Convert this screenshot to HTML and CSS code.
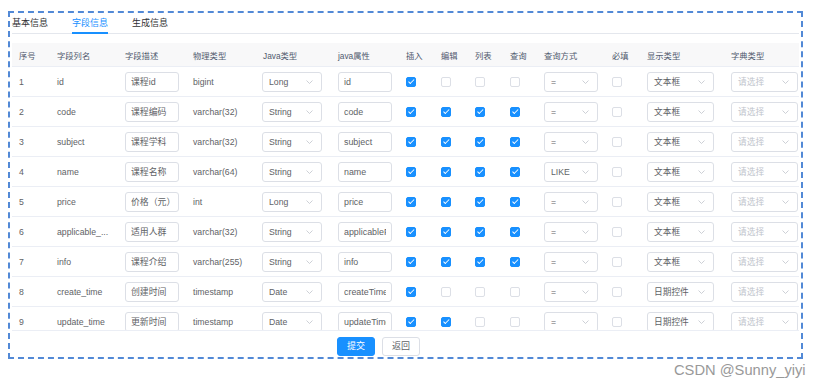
FILE: index.html
```html
<!DOCTYPE html>
<html>
<head>
<meta charset="utf-8">
<link rel="stylesheet" href="styles.css">
</head>
<body>
<div class="frame">
  <div class="tabs">
    <div class="tab">基本信息</div>
    <div class="tab active">字段信息</div>
    <div class="tab">生成信息</div>
  </div>
  <div class="table-wrap">
    <table class="grid">
      <colgroup>
        <col class="c1"><col class="c2"><col class="c3"><col class="c4"><col class="c5"><col class="c6"><col class="c7"><col class="c8"><col class="c9"><col class="c10"><col class="c11"><col class="c12"><col class="c13"><col class="c14">
      </colgroup>
      <thead>
        <tr><th>序号</th><th>字段列名</th><th>字段描述</th><th>物理类型</th><th>Java类型</th><th>java属性</th><th>插入</th><th>编辑</th><th>列表</th><th>查询</th><th>查询方式</th><th>必填</th><th>显示类型</th><th>字典类型</th></tr>
      </thead>
      <tbody>
        <tr><td>1</td><td class="ell">id</td><td><input class="inp" value="课程id"></td><td>bigint</td>
          <td><div class="sel w-java"><span class="val">Long</span><svg class="arr" width="7" height="4" viewBox="0 0 7 4"><polyline points="0.5,0.5 3.5,3.5 6.5,0.5" fill="none" stroke="#c0c4cc" stroke-width="0.8"/></svg></div></td>
          <td><input class="inp" value="id"></td>
          <td><span class="cb on"></span></td><td><span class="cb"></span></td><td><span class="cb"></span></td><td><span class="cb"></span></td>
          <td><div class="sel w-q"><span class="val">=</span><svg class="arr" width="7" height="4" viewBox="0 0 7 4"><polyline points="0.5,0.5 3.5,3.5 6.5,0.5" fill="none" stroke="#c0c4cc" stroke-width="0.8"/></svg></div></td>
          <td><span class="cb"></span></td>
          <td><div class="sel w-d"><span class="val">文本框</span><svg class="arr" width="7" height="4" viewBox="0 0 7 4"><polyline points="0.5,0.5 3.5,3.5 6.5,0.5" fill="none" stroke="#c0c4cc" stroke-width="0.8"/></svg></div></td>
          <td><div class="sel w-d"><span class="val ph">请选择</span><svg class="arr" width="7" height="4" viewBox="0 0 7 4"><polyline points="0.5,0.5 3.5,3.5 6.5,0.5" fill="none" stroke="#c0c4cc" stroke-width="0.8"/></svg></div></td>
        </tr>
        <tr><td>2</td><td class="ell">code</td><td><input class="inp" value="课程编码"></td><td>varchar(32)</td>
          <td><div class="sel w-java"><span class="val">String</span><svg class="arr" width="7" height="4" viewBox="0 0 7 4"><polyline points="0.5,0.5 3.5,3.5 6.5,0.5" fill="none" stroke="#c0c4cc" stroke-width="0.8"/></svg></div></td>
          <td><input class="inp" value="code"></td>
          <td><span class="cb on"></span></td><td><span class="cb on"></span></td><td><span class="cb on"></span></td><td><span class="cb on"></span></td>
          <td><div class="sel w-q"><span class="val">=</span><svg class="arr" width="7" height="4" viewBox="0 0 7 4"><polyline points="0.5,0.5 3.5,3.5 6.5,0.5" fill="none" stroke="#c0c4cc" stroke-width="0.8"/></svg></div></td>
          <td><span class="cb"></span></td>
          <td><div class="sel w-d"><span class="val">文本框</span><svg class="arr" width="7" height="4" viewBox="0 0 7 4"><polyline points="0.5,0.5 3.5,3.5 6.5,0.5" fill="none" stroke="#c0c4cc" stroke-width="0.8"/></svg></div></td>
          <td><div class="sel w-d"><span class="val ph">请选择</span><svg class="arr" width="7" height="4" viewBox="0 0 7 4"><polyline points="0.5,0.5 3.5,3.5 6.5,0.5" fill="none" stroke="#c0c4cc" stroke-width="0.8"/></svg></div></td>
        </tr>
        <tr><td>3</td><td class="ell">subject</td><td><input class="inp" value="课程学科"></td><td>varchar(32)</td>
          <td><div class="sel w-java"><span class="val">String</span><svg class="arr" width="7" height="4" viewBox="0 0 7 4"><polyline points="0.5,0.5 3.5,3.5 6.5,0.5" fill="none" stroke="#c0c4cc" stroke-width="0.8"/></svg></div></td>
          <td><input class="inp" value="subject"></td>
          <td><span class="cb on"></span></td><td><span class="cb on"></span></td><td><span class="cb on"></span></td><td><span class="cb on"></span></td>
          <td><div class="sel w-q"><span class="val">=</span><svg class="arr" width="7" height="4" viewBox="0 0 7 4"><polyline points="0.5,0.5 3.5,3.5 6.5,0.5" fill="none" stroke="#c0c4cc" stroke-width="0.8"/></svg></div></td>
          <td><span class="cb"></span></td>
          <td><div class="sel w-d"><span class="val">文本框</span><svg class="arr" width="7" height="4" viewBox="0 0 7 4"><polyline points="0.5,0.5 3.5,3.5 6.5,0.5" fill="none" stroke="#c0c4cc" stroke-width="0.8"/></svg></div></td>
          <td><div class="sel w-d"><span class="val ph">请选择</span><svg class="arr" width="7" height="4" viewBox="0 0 7 4"><polyline points="0.5,0.5 3.5,3.5 6.5,0.5" fill="none" stroke="#c0c4cc" stroke-width="0.8"/></svg></div></td>
        </tr>
        <tr><td>4</td><td class="ell">name</td><td><input class="inp" value="课程名称"></td><td>varchar(64)</td>
          <td><div class="sel w-java"><span class="val">String</span><svg class="arr" width="7" height="4" viewBox="0 0 7 4"><polyline points="0.5,0.5 3.5,3.5 6.5,0.5" fill="none" stroke="#c0c4cc" stroke-width="0.8"/></svg></div></td>
          <td><input class="inp" value="name"></td>
          <td><span class="cb on"></span></td><td><span class="cb on"></span></td><td><span class="cb on"></span></td><td><span class="cb on"></span></td>
          <td><div class="sel w-q"><span class="val">LIKE</span><svg class="arr" width="7" height="4" viewBox="0 0 7 4"><polyline points="0.5,0.5 3.5,3.5 6.5,0.5" fill="none" stroke="#c0c4cc" stroke-width="0.8"/></svg></div></td>
          <td><span class="cb"></span></td>
          <td><div class="sel w-d"><span class="val">文本框</span><svg class="arr" width="7" height="4" viewBox="0 0 7 4"><polyline points="0.5,0.5 3.5,3.5 6.5,0.5" fill="none" stroke="#c0c4cc" stroke-width="0.8"/></svg></div></td>
          <td><div class="sel w-d"><span class="val ph">请选择</span><svg class="arr" width="7" height="4" viewBox="0 0 7 4"><polyline points="0.5,0.5 3.5,3.5 6.5,0.5" fill="none" stroke="#c0c4cc" stroke-width="0.8"/></svg></div></td>
        </tr>
        <tr><td>5</td><td class="ell">price</td><td><input class="inp" value="价格（元）"></td><td>int</td>
          <td><div class="sel w-java"><span class="val">Long</span><svg class="arr" width="7" height="4" viewBox="0 0 7 4"><polyline points="0.5,0.5 3.5,3.5 6.5,0.5" fill="none" stroke="#c0c4cc" stroke-width="0.8"/></svg></div></td>
          <td><input class="inp" value="price"></td>
          <td><span class="cb on"></span></td><td><span class="cb on"></span></td><td><span class="cb on"></span></td><td><span class="cb on"></span></td>
          <td><div class="sel w-q"><span class="val">=</span><svg class="arr" width="7" height="4" viewBox="0 0 7 4"><polyline points="0.5,0.5 3.5,3.5 6.5,0.5" fill="none" stroke="#c0c4cc" stroke-width="0.8"/></svg></div></td>
          <td><span class="cb"></span></td>
          <td><div class="sel w-d"><span class="val">文本框</span><svg class="arr" width="7" height="4" viewBox="0 0 7 4"><polyline points="0.5,0.5 3.5,3.5 6.5,0.5" fill="none" stroke="#c0c4cc" stroke-width="0.8"/></svg></div></td>
          <td><div class="sel w-d"><span class="val ph">请选择</span><svg class="arr" width="7" height="4" viewBox="0 0 7 4"><polyline points="0.5,0.5 3.5,3.5 6.5,0.5" fill="none" stroke="#c0c4cc" stroke-width="0.8"/></svg></div></td>
        </tr>
        <tr><td>6</td><td class="ell">applicable_...</td><td><input class="inp" value="适用人群"></td><td>varchar(32)</td>
          <td><div class="sel w-java"><span class="val">String</span><svg class="arr" width="7" height="4" viewBox="0 0 7 4"><polyline points="0.5,0.5 3.5,3.5 6.5,0.5" fill="none" stroke="#c0c4cc" stroke-width="0.8"/></svg></div></td>
          <td><input class="inp" value="applicablePerson"></td>
          <td><span class="cb on"></span></td><td><span class="cb on"></span></td><td><span class="cb on"></span></td><td><span class="cb on"></span></td>
          <td><div class="sel w-q"><span class="val">=</span><svg class="arr" width="7" height="4" viewBox="0 0 7 4"><polyline points="0.5,0.5 3.5,3.5 6.5,0.5" fill="none" stroke="#c0c4cc" stroke-width="0.8"/></svg></div></td>
          <td><span class="cb"></span></td>
          <td><div class="sel w-d"><span class="val">文本框</span><svg class="arr" width="7" height="4" viewBox="0 0 7 4"><polyline points="0.5,0.5 3.5,3.5 6.5,0.5" fill="none" stroke="#c0c4cc" stroke-width="0.8"/></svg></div></td>
          <td><div class="sel w-d"><span class="val ph">请选择</span><svg class="arr" width="7" height="4" viewBox="0 0 7 4"><polyline points="0.5,0.5 3.5,3.5 6.5,0.5" fill="none" stroke="#c0c4cc" stroke-width="0.8"/></svg></div></td>
        </tr>
        <tr><td>7</td><td class="ell">info</td><td><input class="inp" value="课程介绍"></td><td>varchar(255)</td>
          <td><div class="sel w-java"><span class="val">String</span><svg class="arr" width="7" height="4" viewBox="0 0 7 4"><polyline points="0.5,0.5 3.5,3.5 6.5,0.5" fill="none" stroke="#c0c4cc" stroke-width="0.8"/></svg></div></td>
          <td><input class="inp" value="info"></td>
          <td><span class="cb on"></span></td><td><span class="cb on"></span></td><td><span class="cb on"></span></td><td><span class="cb on"></span></td>
          <td><div class="sel w-q"><span class="val">=</span><svg class="arr" width="7" height="4" viewBox="0 0 7 4"><polyline points="0.5,0.5 3.5,3.5 6.5,0.5" fill="none" stroke="#c0c4cc" stroke-width="0.8"/></svg></div></td>
          <td><span class="cb"></span></td>
          <td><div class="sel w-d"><span class="val">文本框</span><svg class="arr" width="7" height="4" viewBox="0 0 7 4"><polyline points="0.5,0.5 3.5,3.5 6.5,0.5" fill="none" stroke="#c0c4cc" stroke-width="0.8"/></svg></div></td>
          <td><div class="sel w-d"><span class="val ph">请选择</span><svg class="arr" width="7" height="4" viewBox="0 0 7 4"><polyline points="0.5,0.5 3.5,3.5 6.5,0.5" fill="none" stroke="#c0c4cc" stroke-width="0.8"/></svg></div></td>
        </tr>
        <tr><td>8</td><td class="ell">create_time</td><td><input class="inp" value="创建时间"></td><td>timestamp</td>
          <td><div class="sel w-java"><span class="val">Date</span><svg class="arr" width="7" height="4" viewBox="0 0 7 4"><polyline points="0.5,0.5 3.5,3.5 6.5,0.5" fill="none" stroke="#c0c4cc" stroke-width="0.8"/></svg></div></td>
          <td><input class="inp" value="createTime"></td>
          <td><span class="cb on"></span></td><td><span class="cb"></span></td><td><span class="cb"></span></td><td><span class="cb"></span></td>
          <td><div class="sel w-q"><span class="val">=</span><svg class="arr" width="7" height="4" viewBox="0 0 7 4"><polyline points="0.5,0.5 3.5,3.5 6.5,0.5" fill="none" stroke="#c0c4cc" stroke-width="0.8"/></svg></div></td>
          <td><span class="cb"></span></td>
          <td><div class="sel w-d"><span class="val">日期控件</span><svg class="arr" width="7" height="4" viewBox="0 0 7 4"><polyline points="0.5,0.5 3.5,3.5 6.5,0.5" fill="none" stroke="#c0c4cc" stroke-width="0.8"/></svg></div></td>
          <td><div class="sel w-d"><span class="val ph">请选择</span><svg class="arr" width="7" height="4" viewBox="0 0 7 4"><polyline points="0.5,0.5 3.5,3.5 6.5,0.5" fill="none" stroke="#c0c4cc" stroke-width="0.8"/></svg></div></td>
        </tr>
        <tr><td>9</td><td class="ell">update_time</td><td><input class="inp" value="更新时间"></td><td>timestamp</td>
          <td><div class="sel w-java"><span class="val">Date</span><svg class="arr" width="7" height="4" viewBox="0 0 7 4"><polyline points="0.5,0.5 3.5,3.5 6.5,0.5" fill="none" stroke="#c0c4cc" stroke-width="0.8"/></svg></div></td>
          <td><input class="inp" value="updateTime"></td>
          <td><span class="cb on"></span></td><td><span class="cb on"></span></td><td><span class="cb"></span></td><td><span class="cb"></span></td>
          <td><div class="sel w-q"><span class="val">=</span><svg class="arr" width="7" height="4" viewBox="0 0 7 4"><polyline points="0.5,0.5 3.5,3.5 6.5,0.5" fill="none" stroke="#c0c4cc" stroke-width="0.8"/></svg></div></td>
          <td><span class="cb"></span></td>
          <td><div class="sel w-d"><span class="val">日期控件</span><svg class="arr" width="7" height="4" viewBox="0 0 7 4"><polyline points="0.5,0.5 3.5,3.5 6.5,0.5" fill="none" stroke="#c0c4cc" stroke-width="0.8"/></svg></div></td>
          <td><div class="sel w-d"><span class="val ph">请选择</span><svg class="arr" width="7" height="4" viewBox="0 0 7 4"><polyline points="0.5,0.5 3.5,3.5 6.5,0.5" fill="none" stroke="#c0c4cc" stroke-width="0.8"/></svg></div></td>
        </tr>
      </tbody>
    </table>
  </div>
  <div class="actions">
    <button class="btn primary">提交</button>
    <button class="btn">返回</button>
  </div>
</div>
<div class="watermark">CSDN @Sunny_yiyi</div>
</body>
</html>
```

FILE: styles.css
```css
html, body {
  margin: 0;
  padding: 0;
  background: #ffffff;
}
body {
  font-family: "Liberation Sans", Arial, "Noto Sans CJK SC", sans-serif;
  color: #606266;
  padding-top: 11px;
  padding-left: 8px;
  position: relative;
  width: 823px;
  height: 389px;
  box-sizing: border-box;
  overflow: hidden;
}
.frame {
  width: 795px;
  height: 348px;
  box-sizing: border-box;
  border: 2px dashed #5289d6;
  padding: 0 2px;
  display: flex;
  flex-direction: column;
}
.tabs {
  display: flex;
  border-bottom: 1px solid #e4e7ed;
}
.tab {
  font-size: 9px;
  line-height: 17px;
  height: 17px;
  padding: 2px 12px 0;
  color: #303133;
  border-bottom: 2px solid transparent;
  margin-bottom: -1px;
}
.tab:first-child {
  padding-left: 0;
}
.tab.active {
  color: #1890ff;
  border-bottom-color: #1890ff;
  padding: 2px 0 0;
  margin: 0 12px -1px;
}
.table-wrap {
  margin-top: 9px;
  height: 287px;
  overflow: hidden;
  border-bottom: 1px solid #ebeef5;
}
.grid {
  width: 787px;
  table-layout: fixed;
  border-collapse: collapse;
  border-spacing: 0;
}
.c1 { width: 38px; }
.c2 { width: 68px; }
.c3 { width: 68px; }
.c4 { width: 70px; }
.c5 { width: 75px; }
.c6 { width: 68px; }
.c7 { width: 35px; }
.c8 { width: 34px; }
.c9 { width: 35px; }
.c10 { width: 34px; }
.c11 { width: 68px; }
.c12 { width: 35px; }
.c13 { width: 84px; }
.c14 { width: 75px; }
.grid th {
  background: #f8f8f9;
  color: #515a6e;
  font-weight: normal;
  font-size: 8.3px;
  height: 23px;
  padding: 0 7px;
  text-align: left;
  border-bottom: 1px solid #ebeef5;
  white-space: nowrap;
}
.grid td {
  height: 29px;
  padding: 0 7px;
  font-size: 8.7px;
  border-bottom: 1px solid #ebeef5;
  white-space: nowrap;
  vertical-align: middle;
}
.ell {
  overflow: hidden;
}
.inp {
  display: block;
  width: 54px;
  height: 20px;
  box-sizing: border-box;
  border: 1px solid #dcdfe6;
  border-radius: 3px;
  padding: 0 5px;
  font-family: inherit;
  font-size: 8.9px;
  color: #606266;
  background: #fff;
  outline: none;
}
.sel {
  display: flex;
  align-items: center;
  justify-content: space-between;
  height: 20px;
  box-sizing: border-box;
  border: 1px solid #dcdfe6;
  border-radius: 3px;
  padding: 0 8px 0 6px;
  background: #fff;
}
.w-java { width: 60px; margin-left: -1px; }
.w-q { width: 54px; }
.w-d { width: 67px; }
.val {
  font-size: 8.7px;
  color: #606266;
}
.val.ph {
  color: #c0c4cc;
}
.arr {
  display: block;
  flex: none;
}
.cb {
  display: block;
  width: 10px;
  height: 10px;
  box-sizing: border-box;
  border: 1px solid #dcdfe6;
  border-radius: 2px;
  background: #fff;
  position: relative;
}
.cb.on {
  background: #1890ff;
  border-color: #1890ff;
}
.cb.on::after {
  content: "";
  position: absolute;
  left: 2.6px;
  top: 0.8px;
  width: 2px;
  height: 4.5px;
  border: solid #fff;
  border-width: 0 1px 1px 0;
  transform: rotate(45deg);
}
.actions {
  display: flex;
  justify-content: center;
  gap: 7px;
  margin-top: 6px;
  padding-right: 54px;
}
.btn {
  height: 19px;
  padding: 0 9px;
  font-family: inherit;
  font-size: 9px;
  border-radius: 3px;
  border: 1px solid #dcdfe6;
  background: #fff;
  color: #606266;
  line-height: 17px;
}
.btn.primary {
  background: #1890ff;
  border-color: #1890ff;
  color: #fff;
}
.watermark {
  position: absolute;
  left: 674px;
  top: 362px;
  font-size: 14.7px;
  line-height: 16px;
  color: #999999;
  white-space: nowrap;
}
```
